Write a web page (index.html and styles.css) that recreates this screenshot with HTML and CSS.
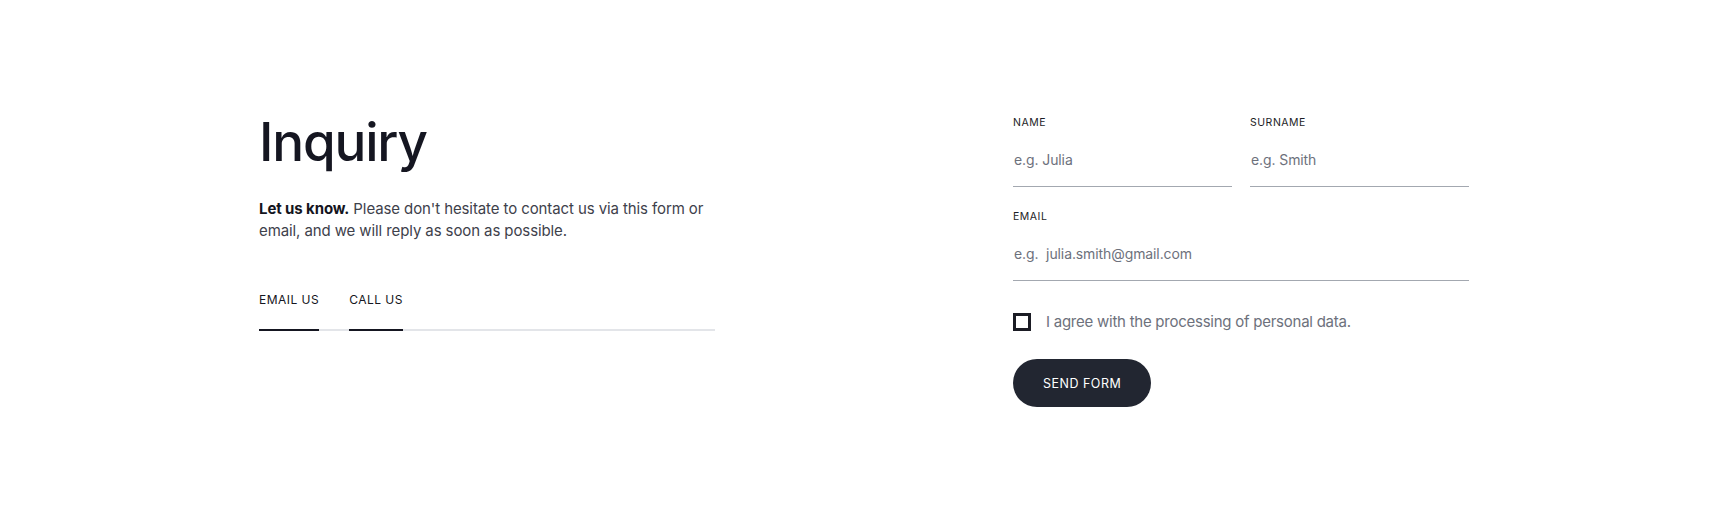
FILE: index.html
```html
<!DOCTYPE html>
<html lang="en">
<head>
<meta charset="utf-8">
<title>Inquiry</title>
<link rel="stylesheet" href="styles.css">
</head>
<body>
<main class="inquiry">
  <section class="intro">
    <h1 class="intro-title">Inquiry</h1>
    <p class="intro-text"><strong>Let us know.</strong> Please don't hesitate to contact us via this form or email, and we will reply as soon as possible.</p>
    <nav class="tabs">
      <a class="tab" href="#">EMAIL US</a>
      <a class="tab" href="#">CALL US</a>
    </nav>
  </section>
  <form class="form">
    <div class="form-row">
      <label class="field">
        <span class="field-label">NAME</span>
        <input class="field-input" type="text" placeholder="e.g. Julia">
      </label>
      <label class="field">
        <span class="field-label">SURNAME</span>
        <input class="field-input" type="text" placeholder="e.g. Smith">
      </label>
    </div>
    <label class="field field-wide">
      <span class="field-label">EMAIL</span>
      <input class="field-input" type="email" placeholder="e.g.  julia.smith@gmail.com">
    </label>
    <label class="consent">
      <span class="consent-box"></span>
      <span class="consent-text">I agree with the processing of personal data.</span>
    </label>
    <button class="submit" type="button">SEND FORM</button>
  </form>
</main>
</body>
</html>
```
FILE: styles.css
```css
* { box-sizing: border-box; }
html, body { margin: 0; padding: 0; background: #ffffff; }
body {
  font-family: Inter, "Noto Sans", sans-serif;
  color: #151621;
}
.inquiry {
  width: 1210px;
  margin: 0 auto;
  padding-top: 116px;
  display: grid;
  grid-template-columns: 456px 456px;
  justify-content: space-between;
  align-items: start;
}
.intro-title {
  margin: 0;
  font-size: 53px;
  line-height: 53px;
  font-weight: 500;
  letter-spacing: -1.2px;
  color: #151621;
}
.intro-text {
  margin: 29px 0 0;
  font-size: 15px;
  line-height: 22px;
  letter-spacing: -0.1px;
  color: #3e414b;
}
.intro-text strong { font-weight: 700; color: #14151d; }
.tabs {
  margin-top: 50px;
  display: flex;
  gap: 30px;
  border-bottom: 2px solid #e3e5e9;
}
.tab {
  display: block;
  font-size: 12px;
  line-height: 16px;
  letter-spacing: 0.04em;
  color: #151621;
  text-decoration: none;
  padding-bottom: 21px;
  border-bottom: 2px solid #151621;
  margin-bottom: -2px;
}
.form {
  display: flex;
  flex-direction: column;
  align-items: flex-start;
}
.form-row {
  width: 100%;
  display: grid;
  grid-template-columns: 1fr 1fr;
  gap: 18px;
}
.field {
  display: flex;
  flex-direction: column;
}
.field-wide { width: 100%; margin-top: 23px; }
.field-label {
  font-size: 10.5px;
  line-height: 14px;
  letter-spacing: 0.05em;
  color: #1c1d26;
  margin-bottom: 8px;
}
.field-input {
  font-family: Inter, "Noto Sans", sans-serif;
  font-size: 14px;
  letter-spacing: -0.1px;
  color: #1c1d26;
  border: 0;
  border-bottom: 1px solid #a3a8b0;
  padding: 11px 0 17px 1px;
  height: 49px;
  background: transparent;
  outline: none;
  width: 100%;
}
.field-input::placeholder { color: #6d717c; }
.consent {
  margin-top: 31px;
  display: flex;
  align-items: center;
  gap: 15px;
}
.consent-box {
  width: 18px;
  height: 18px;
  border: 3px solid #1b1c24;
  flex: none;
}
.consent-text {
  font-size: 15px;
  line-height: 20px;
  letter-spacing: -0.25px;
  color: #6d717c;
}
.submit {
  margin-top: 27px;
  height: 48px;
  padding: 0 30px;
  border: 0;
  border-radius: 24px;
  background: #222631;
  color: #ffffff;
  font-family: Inter, "Noto Sans", sans-serif;
  font-size: 12.5px;
  letter-spacing: 0.04em;
  cursor: pointer;
}
```
